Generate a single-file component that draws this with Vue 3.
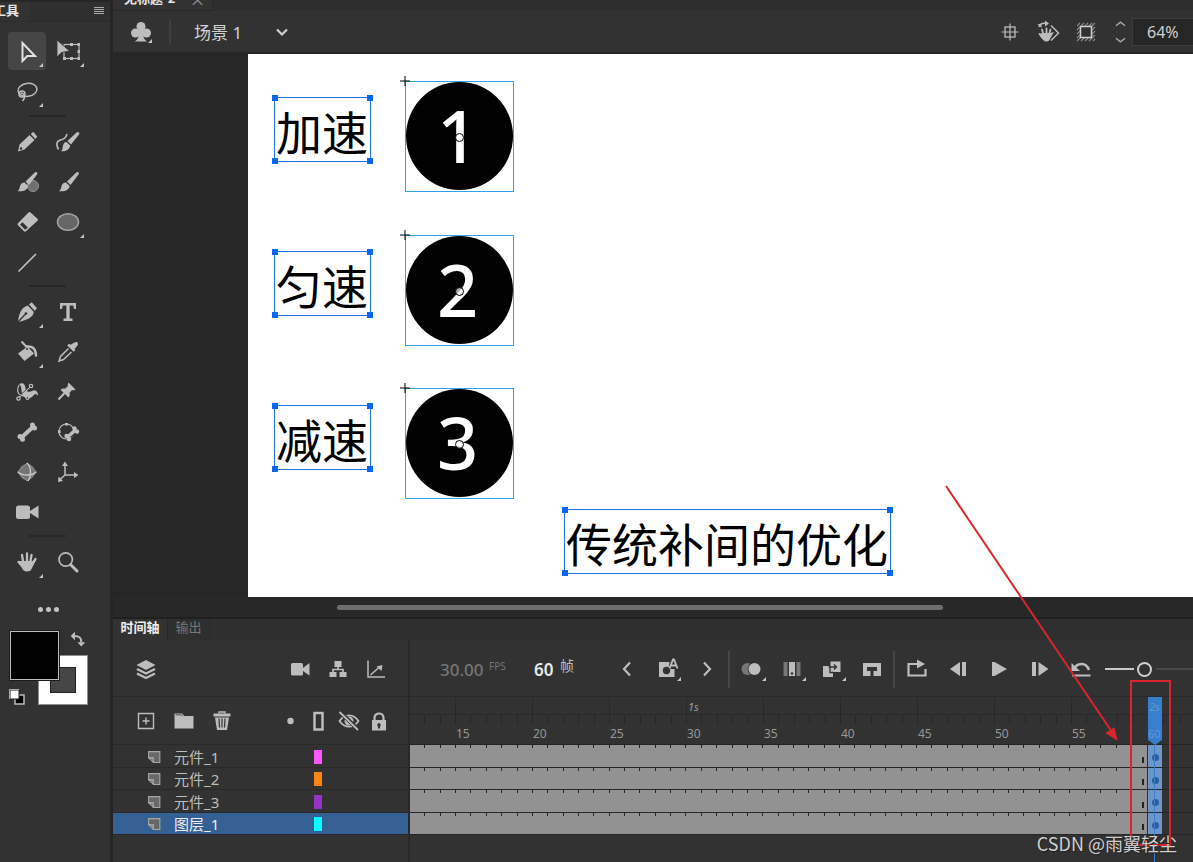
<script setup>
import { ref } from 'vue'

const icons = {
  select: '<path d="M7.5 4v18l4.8-5H20z" fill="none" stroke="currentColor" stroke-width="2"/>',
  transform: '<rect x="8" y="5.500" width="15" height="14" fill="none" stroke="currentColor" stroke-width="1.200"/><path d="M14 4h3v3h-3zM21.500 4h2.500v3h-2.500zM21.500 11h2.500v3h-2.500zM21.500 18h2.500v3h-2.500zM14 18h3v3h-3zM7 18h3v3h-3z"/><path d="M1 1v17l4.500-4.500 8-1.500z" stroke="#323232" stroke-width=".8"/>',
  lasso: '<g fill="none" stroke="currentColor" stroke-width="1.500"><ellipse cx="12.500" cy="11" rx="9.500" ry="6.500" transform="rotate(-8 12 11)"/><circle cx="7" cy="15" r="3"/><path d="M5.500 14c5 0 5 5 2 8"/></g>',
  pencil: '<path d="M4.500 14.500 14.500 5l5 5L9.500 19.500 3 21.500zM15.800 4l2.500-2.200 4 5L20.300 9z"/><circle cx="6" cy="18.500" r="1.200" fill="#323232"/>',
  brush: '<path d="M22.500 2.500c.6.600.5 1.200 0 2L14.500 15l-3.500-3.500 9-8.700c.9-.8 1.800-.9 2.500-.3zM10 12.500l3.700 3.500c-.5 3.500-4.200 6-10.700 5.200 2-1.500 2-3 2.500-5.200.5-2 2-3.300 4.500-3.500z"/>',
  fluid: '<path d="M23 2.500c.6.600.5 1.200 0 2L15 14.500 11.500 11l9-8.500c.9-.8 1.800-.8 2.500 0zM10.500 12l3.700 3.500c-.5 3.500-3.700 6.500-9.200 5.700 2-1.500 1.500-3.500 2-5.700.5-2 1.500-3.300 3.500-3.500z"/><path d="M2.500 19.500C-.5 14 .8 11 4.500 10S10 8 11 4" fill="none" stroke="currentColor" stroke-width="1.600"/>',
  mixbrush: '<circle cx="18" cy="16" r="5.500" fill="#707070" stroke="#929292"/><path d="M22 2.500c.6.600.5 1.200 0 2L14 15l-3.500-3.500 9-8.700c.9-.8 1.800-.9 2.500-.3zM9.500 12.500l3.700 3.500c-.5 3.500-4.200 6-10.700 5.200 2-1.500 2-3 2.500-5.200.5-2 2-3.300 4.500-3.500z"/>',
  eraser: '<path d="M13.500 2.500c.7-.7 1.400-.7 2 0l7 6.300c.6.600.6 1.300 0 1.900L11 21.300c-.7.600-1.400.6-2 0l-6-6c-.6-.7-.6-1.300 0-2z"/><path d="m5 14.500 2.500-2.200 5.300 5.200-2.600 2.300z" fill="#323232"/>',
  oval: '<ellipse cx="12" cy="12" rx="10.500" ry="8.200" fill="#666" stroke="#a5a5a5" stroke-width="1.500"/>',
  line: '<path d="M4 21 20.500 4.500" stroke="currentColor" stroke-width="1.700" stroke-linecap="round"/>',
  pen: '<path d="m14 4.500 2.700-2.300 5.300 6-2.300 2.500zM12.800 5.500l6 6.500c-.5 5-6 8-15.800 10C4 14 6 7.500 12.800 5.500z"/><path d="m3 22 7.500-8" stroke="#323232" stroke-width="1.200"/><circle cx="11" cy="13.500" r="1.300" fill="#323232"/>',
  type: '<path d="M4 3h16v6h-2l-.8-3.500h-3.500v13h2.800V21H7.500v-2.500h2.800v-13H6.800L6 9H4z"/>',
  bucket: '<path d="m3 13.500 9.500-7 6.500 7L9.500 21z"/><path d="m6.500 1.500 6 6.500" stroke="currentColor" stroke-width="2"/><path d="M12 6.500c5-.5 8.500 1.500 9 9" fill="none" stroke="currentColor" stroke-width="2.500" stroke-linecap="round"/><circle cx="12" cy="9" r="1" fill="#323232"/>',
  dropper: '<path d="M18.500 2.500c2-1.500 4.500.5 3 3L18.500 9l1 1-1.800 1.800-6.500-6.300L13 3.800l1.500 1z"/><path d="M12.500 8.500 4.500 16.500 3 21l4.500-1.500L15.500 12" fill="none" stroke="currentColor" stroke-width="1.500"/>',
  warp: '<path d="M4 4c4-2 6 0 6.500 4s2 4 5 3.500C18 10.500 21 8 23 14l-.5 2c-1-3-2.500-2.500-4.500 0-3 3.500-7 3-9.500 0C5 12 8 7 4 4z"/><g fill="none" stroke="currentColor" stroke-width="1.200"><path d="M3.500 18 16 6M4 5c-2 4-2 6 0 9l9 4"/></g><path d="m5 15.500 9-8.500" stroke="#323232" stroke-width=".8"/><g fill="#323232" stroke="currentColor" stroke-width="1.200"><circle cx="3.500" cy="18.500" r="1.700"/><circle cx="16" cy="6" r="1.700"/><circle cx="12.500" cy="18" r="1.400"/></g>',
  pin: '<path d="m12.500 2.500 7 7c-1.500 1-2.500 1-3.500.5L13.500 13c.5 2 .2 3-1 4.500L4.500 9.800C6 8.500 7.500 8.300 9 8.700L12 6c-.5-1-.3-2.200.5-3.500z"/><path d="m8.500 13-6 6.500" stroke="currentColor" stroke-width="2"/>',
  bone: '<path d="m6.500 17.500 12-11" stroke="currentColor" stroke-width="4"/><circle cx="17.500" cy="5" r="2.500"/><circle cx="19.500" cy="8" r="2.500"/><circle cx="5" cy="16.500" r="2.500"/><circle cx="7.500" cy="19.200" r="2.500"/>',
  bind: '<circle cx="10.500" cy="11.500" r="7.500" fill="none" stroke="currentColor" stroke-width="1.200"/><path d="M9 3h3v2.500H9zM2 10h2.500v3H2z"/><path d="m11.500 17 8-7" stroke="#323232" stroke-width="6"/><path d="m11.500 17 8-7" stroke="currentColor" stroke-width="3.500"/><circle cx="18.500" cy="8.500" r="2.200"/><circle cx="21" cy="11.500" r="2.200"/><circle cx="10.500" cy="16" r="2.200"/><circle cx="13" cy="19" r="2.200"/>',
  sphere: '<circle cx="12" cy="12" r="8" fill="#757575"/><path d="M2.500 12 12 3l9.500 9L12 21z" fill="#747474" stroke="#959595"/><path d="M3 12c4 4 14 4 18 0M12 3c5 4 4 14 1 18" fill="none" stroke="#c8c8c8" stroke-width="1.300"/>',
  axes: '<path d="M9 4v11h11M9 15l-5.500 5" fill="none" stroke="currentColor" stroke-width="1.500"/><path d="m9 1.500 3 4.500H6zM22.500 15 18 18v-6zM2 22l.5-5.500 4.500 4.500z"/>',
  camera: '<rect x="1" y="5.500" width="14" height="13.500" rx="2.500"/><path d="m15 11 8.500-5.500v13L15 13z"/>',
  hand: '<path d="M7 11h11l3-1-4 8c-1 2.500-2 3.500-5 3.500S8 20 7 18l-4.500-7z"/><g fill="none" stroke="currentColor" stroke-linecap="round" stroke-width="2.300"><path d="M8.500 14 7 5M12 13V3.500M15 14l1.500-9M16.500 15l4-6M8 17l-4.500-5"/></g>',
  magnifier: '<circle cx="9.700" cy="9.500" r="6.700" fill="none" stroke="currentColor" stroke-width="1.700"/><path d="m14.500 14.500 6.500 6.500" stroke="currentColor" stroke-width="3" stroke-linecap="round"/>',
  club: '<circle cx="12" cy="6.500" r="4.500"/><circle cx="6.500" cy="13" r="4.500"/><circle cx="17.500" cy="13" r="4.500"/><path d="M10 8h4v5c.4 5 1.500 7 4.500 8.500h-13c3-1.500 4-3.500 4.500-8.500z"/>',
  chevron: '<path d="m7 9.500 5 5 5-5" fill="none" stroke="currentColor" stroke-width="2.200"/>',
  center: '<path d="M12 3.500v17M3.500 12h17" stroke="currentColor" stroke-width="1.200"/><rect x="7" y="7" width="10" height="10" fill="none" stroke="currentColor" stroke-width="1.300"/>',
  rotate: '<path d="m15 5.500 7.500 7.500-7.500 7.500" fill="none" stroke="currentColor" stroke-width="1.500"/><path d="M3 7c1-3 4-4 7-3.500" fill="none" stroke="currentColor" stroke-width="1.500"/><path d="m9 .5 4 3-4 3zM1.500 4h4v4z"/><path d="M6.500 13h8l3.500-1-3.500 6c-1 2.500-2 3.500-4 3.500-3 0-4-2-7.500-7.500z"/><path d="M7.500 15 6 9.500M10.500 15V8.500M13 15l1.500-5.500M6.500 18 3.500 14" stroke="currentColor" stroke-width="1.800" stroke-linecap="round"/>',
  clip: '<path d="M3 6l3-3M3 10l7-7M3 14 14 3M3 18 18 3M3 21 21 3M7 21 21 7M11 21l10-10M15 21l6-6M19 21l2-2" stroke="#8a8a8a" stroke-width="1.100"/><rect x="6.500" y="6.500" width="11" height="11" fill="#323232" stroke="#d0d0d0" stroke-width="1.500"/>',
  layers: '<path d="M12 3 2.500 8l9.500 5 9.500-5z"/><path d="m3 12 9 4.500 9-4.500M3 16.500 12 21l9-4.500" fill="none" stroke="currentColor" stroke-width="2.300"/>',
  video: '<rect x="3" y="6" width="12" height="12.500" rx="1.500"/><path d="m15 11 6.500-5v12.500L15 14z"/>',
  tree: '<rect x="8.500" y="4" width="7" height="6"/><rect x="3.500" y="15" width="7" height="5"/><rect x="13.500" y="15" width="7" height="5"/><path d="M12 10v2.500M7 15v-2.500h10V15" fill="none" stroke="currentColor" stroke-width="1.600"/>',
  graph: '<path d="M4 3.500v16.500h17M6.500 18l9-8" fill="none" stroke="currentColor" stroke-width="1.500"/><path d="m12.500 9.500 6-1.500-1 6z"/>',
  add: '<path d="M4.500 4.500h15v15h-15zM12 8.500v7M8.500 12h7" fill="none" stroke="currentColor" stroke-width="1.400"/>',
  folder: '<path d="M2.500 4.500H10l2.500 2.500h9v12.500h-19z"/><path d="M3.500 5.800h6l1.300 1.400" fill="none" stroke="#323232" stroke-width=".8"/>',
  trash: '<path d="M3.500 4.500h17v3h-17zM5 8.500h14l-2 12.500H7z"/><path d="M9 4.500V3h6v1.500" fill="none" stroke="currentColor" stroke-width="1.300"/><path d="m9 9.500.5 9M12 9.500v9M15 9.500l-.5 9" stroke="#323232" stroke-width="1.200"/>',
  bullet: '<circle cx="13.500" cy="12" r="3.200"/>',
  outline: '<rect x="7.500" y="4" width="8" height="16.500" fill="none" stroke="currentColor" stroke-width="2.500"/>',
  hidden: '<path d="M2.500 12c5-7.500 14-7.500 19 0-5 7.500-14 7.500-19 0z" fill="none" stroke="currentColor" stroke-width="1.800"/><circle cx="12" cy="12" r="4.500"/><path d="m3 3 18.500 18" stroke="#323232" stroke-width="4"/><path d="m2.500 3 18.500 18" stroke="currentColor" stroke-width="1.800"/>',
  lock: '<path d="M5 11h14v10.500H5z"/><path d="M7.500 12V9c0-6 9-6 9 0v3" fill="none" stroke="currentColor" stroke-width="2.200"/><path d="M12 14a2 2 0 0 1 1 3.500v2h-2v-2a2 2 0 0 1 1-3.500z" fill="#323232"/>',
  page: '<path d="M5.500 5.500h13.500v13h-7.500L5.500 13z" fill="#686868" stroke="#a6a6a6" stroke-width="1.300"/><path d="M5.500 13H11v5.500" fill="none" stroke="#b5b5b5" stroke-width="1.300"/>',
  prev: '<path d="m15 5.500-6 6.500 6 6.500" fill="none" stroke="currentColor" stroke-width="2.200"/>',
  next: '<path d="m9 5.500 6 6.500-6 6.500" fill="none" stroke="currentColor" stroke-width="2.200"/>',
  autokey: '<path d="M4 5h10.500l-1 7h6v8H4z"/><circle cx="11.500" cy="13.500" r="3.700" fill="#323232"/><path d="m14.500 11.500 3.500-9h1l3.500 9M15.500 8.500h6" fill="none" stroke="currentColor" stroke-width="1.900"/>',
  onion: '<circle cx="7.500" cy="12" r="6" fill="#777"/><circle cx="14.500" cy="12" r="6.800" fill="#323232"/><circle cx="14.500" cy="12" r="6"/>',
  multi: '<path d="M3.500 5h4v14h-4zM16.500 5h4v14h-4z" fill="#777"/><path d="M9 5h6v14H9z"/><circle cx="12" cy="16.500" r="1.300" fill="#323232"/>',
  tween: '<path d="M3 9h10v11H3z"/><path d="M10.500 4.500h10v10.500h-10z"/><path d="M10 9v6.500h4M8.500 10h7.500M14 7.500l2.500 2.500-2.500 2.500" fill="none" stroke="#323232" stroke-width="1.300"/>',
  insert: '<rect x="3" y="6" width="18" height="13"/><path d="M7 10h10v4h-3.500v5h-3v-5H7z" fill="#323232"/>',
  loop: '<path d="M3.500 12V7H14M3.500 7v11.500h17V12" fill="none" stroke="currentColor" stroke-width="2.200"/><path d="m12 2.500 8 4.500-8 4.500z"/>',
  back: '<path d="M14 5v14L4 12zM16 5h4v14h-4z"/>',
  play: '<path d="M5 5h2.500L20 12 7.500 19H5z"/>',
  forward: '<path d="M10.500 5v14l10-7zM4 5h4v14H4z"/>',
  reset: '<path d="M4.500 12.500C8 5.500 17 4.500 20 13" fill="none" stroke="currentColor" stroke-width="2.500"/><path d="M2.500 6v8H11zM3 17.500h18.500v2H3z"/>',
  swap: '<path d="M6 7c7 0 10 2 10 9" fill="none" stroke="currentColor" stroke-width="3"/><path d="m1 7 6-6v12zM16 22l-5.500-6h11z"/>',
  defaults: '<path d="M10 10h9v9h-9z" fill="#000" stroke="#bbb" stroke-width="1.500"/><path d="M5 5h9v9H5z" fill="#fff" stroke="#222" stroke-width="1"/><path d="M4 4.500h10M4.500 4v10" fill="none" stroke="#aaa" stroke-width="1"/>',
}

const toolGroups = [
  [['select', '选择工具', true], ['transform', '任意变形工具', true], ['lasso', '套索工具', true]],
  [['pencil', '铅笔工具'], ['fluid', '流畅画笔工具'], ['mixbrush', '传统画笔工具'], ['brush', '画笔工具'], ['eraser', '橡皮擦工具'], ['oval', '椭圆工具', true], ['line', '线条工具']],
  [['pen', '钢笔工具', true], ['type', '文本工具'], ['bucket', '颜料桶工具', true], ['dropper', '滴管工具'], ['warp', '资源变形工具'], ['pin', '图钉工具'], ['bone', '骨骼工具'], ['bind', '绑定工具'], ['sphere', '3D 旋转工具'], ['axes', '3D 平移工具'], ['camera', '摄像头']],
  [['hand', '手形工具', true], ['magnifier', '缩放工具']],
]
const activeTool = ref('select')

const captions = [
  { text: '加速', cls: 'c1' },
  { text: '匀速', cls: 'c2' },
  { text: '减速', cls: 'c3' },
  { text: '传统补间的优化', cls: 'c4' },
]
const symbols = [
  { text: '1', cls: 's1' },
  { text: '2', cls: 's2' },
  { text: '3', cls: 's3' },
]

const layers = [
  { name: '元件_1', color: 'pink' },
  { name: '元件_2', color: 'orange' },
  { name: '元件_3', color: 'purple' },
  { name: '图层_1', color: 'cyan' },
]
const selected = ref('图层_1')

const marks = [15, 20, 25, 30, 35, 40, 45, 50, 55, 60]
const navButtons = [['prev', '上一关键帧'], ['autokey', '自动关键帧', true], ['next', '下一关键帧']]
const frameButtons = [['onion', '绘图纸外观', true], ['multi', '编辑多个帧', true], ['tween', '创建补间', true], ['insert', '插入帧']]
const playButtons = [['loop', '循环'], ['back', '后退一帧'], ['play', '播放'], ['forward', '前进一帧'], ['reset', '重置缩放']]
const zoom = ref('64%')
const scale = ref(44)
</script>

<template>
  <div class="app">
    <aside class="tools">
      <header class="tools-head">
        <span class="tools-title">工具</span>
        <button class="burger" aria-label="面板菜单"><i></i><i></i><i></i><i></i></button>
      </header>
      <div v-for="(group, g) in toolGroups" :key="g" class="tool-group">
        <button
          v-for="t in group"
          :key="t[0]"
          class="tool"
          :class="{ active: activeTool === t[0], more: t[2] }"
          :aria-label="t[1]"
          @click="activeTool = t[0]"
        >
          <svg viewBox="0 0 24 24" v-html="icons[t[0]]"></svg>
        </button>
      </div>
      <button class="dots" aria-label="编辑工具栏"><i></i><i></i><i></i></button>
      <div class="swatches">
        <button class="stroke-color" aria-label="笔触颜色"><i></i></button>
        <button class="fill-color" aria-label="填充颜色"></button>
        <button class="swap" aria-label="交换颜色"><svg viewBox="0 0 24 24" v-html="icons.swap"></svg></button>
        <button class="defaults" aria-label="默认颜色"><svg viewBox="0 0 24 24" v-html="icons.defaults"></svg></button>
      </div>
    </aside>

    <main class="work">
      <div class="doc-tabs">
        <div class="doc-tab"><span>无标题-2</span><button aria-label="关闭">×</button></div>
      </div>
      <div class="scene-bar">
        <button class="club more" aria-label="元件"><svg viewBox="0 0 24 24" v-html="icons.club"></svg></button>
        <span class="scene-sep"></span>
        <button class="scene">场景 1<svg viewBox="0 0 24 24" v-html="icons.chevron"></svg></button>
        <div class="view-tools">
          <button aria-label="舞台居中"><svg viewBox="0 0 24 24" v-html="icons.center"></svg></button>
          <button aria-label="旋转舞台"><svg viewBox="0 0 24 24" v-html="icons.rotate"></svg></button>
          <button aria-label="裁切舞台"><svg viewBox="0 0 24 24" v-html="icons.clip"></svg></button>
          <div class="stepper">
            <button aria-label="放大"><svg viewBox="0 0 12 6"><path d="m1 5 5-4 5 4" /></svg></button>
            <button aria-label="缩小"><svg viewBox="0 0 12 6"><path d="m1 1 5 4 5-4" /></svg></button>
          </div>
          <input v-model="zoom" class="zoom" aria-label="缩放比例" />
        </div>
      </div>

      <section class="stage">
        <div class="artboard">
          <div v-for="c in captions" :key="c.cls" class="caption" :class="c.cls">
            {{ c.text }}<i></i><i></i><i></i><i></i>
          </div>
          <div v-for="s in symbols" :key="s.cls" class="symbol" :class="s.cls">
            <div class="disc">{{ s.text }}</div>
            <svg class="origin" viewBox="0 0 10 10"><path d="M5 0v10M0 5h10" /></svg>
            <b></b>
          </div>
        </div>
      </section>
      <div class="hscroll"><div></div></div>

      <section class="timeline">
        <nav class="panel-tabs">
          <button class="on">时间轴</button>
          <button>输出</button>
        </nav>
        <div class="timeline-body">
          <div class="layer-side">
            <div class="side-bar top">
              <button aria-label="图层视图"><svg viewBox="0 0 24 24" v-html="icons.layers"></svg></button>
              <div class="right">
                <button aria-label="摄像头"><svg viewBox="0 0 24 24" v-html="icons.video"></svg></button>
                <button aria-label="父级视图"><svg viewBox="0 0 24 24" v-html="icons.tree"></svg></button>
                <button aria-label="图层深度"><svg viewBox="0 0 24 24" v-html="icons.graph"></svg></button>
              </div>
            </div>
            <div class="side-bar low">
              <button aria-label="新建图层"><svg viewBox="0 0 24 24" v-html="icons.add"></svg></button>
              <button aria-label="新建文件夹"><svg viewBox="0 0 24 24" v-html="icons.folder"></svg></button>
              <button aria-label="删除"><svg viewBox="0 0 24 24" v-html="icons.trash"></svg></button>
              <div class="right">
                <button aria-label="突出显示"><svg viewBox="0 0 24 24" v-html="icons.bullet"></svg></button>
                <button aria-label="轮廓"><svg viewBox="0 0 24 24" v-html="icons.outline"></svg></button>
                <button aria-label="隐藏"><svg viewBox="0 0 24 24" v-html="icons.hidden"></svg></button>
                <button aria-label="锁定"><svg viewBox="0 0 24 24" v-html="icons.lock"></svg></button>
              </div>
            </div>
            <div class="rows">
              <button
                v-for="l in layers"
                :key="l.name"
                class="layer"
                :class="{ selected: selected === l.name }"
                @click="selected = l.name"
              >
                <svg viewBox="0 0 24 24" v-html="icons.page"></svg>
                <span>{{ l.name }}</span>
                <i :class="l.color"></i>
              </button>
            </div>
          </div>

          <div class="frame-side">
            <div class="controls">
              <span class="fps">30.00</span><span class="fps-unit">FPS</span>
              <span class="frame">60</span><span class="frame-unit">帧</span>
              <div class="btns nav">
                <button v-for="b in navButtons" :key="b[0]" :class="{ more: b[2] }" :aria-label="b[1]"><svg viewBox="0 0 24 24" v-html="icons[b[0]]"></svg></button>
              </div>
              <span class="bar"></span>
              <div class="btns">
                <button v-for="b in frameButtons" :key="b[0]" :class="{ more: b[2] }" :aria-label="b[1]"><svg viewBox="0 0 24 24" v-html="icons[b[0]]"></svg></button>
              </div>
              <span class="bar"></span>
              <div class="btns playback">
                <button v-for="b in playButtons" :key="b[0]" :aria-label="b[1]"><svg viewBox="0 0 24 24" v-html="icons[b[0]]"></svg></button>
              </div>
              <input v-model="scale" class="scale" type="range" min="0" max="100" aria-label="时间轴缩放" />
            </div>

            <div class="ruler">
              <div class="lead"><i v-for="n in 3" :key="n"></i></div>
              <div v-for="m in marks" :key="m" class="mark">
                <em>{{ m === 30 ? '1s' : '' }}</em>
                <div class="ticks"><i v-for="n in 5" :key="n"></i></div>
                <span>{{ m === 60 ? '' : m }}</span>
              </div>
            </div>

            <div class="rows">
              <div v-for="l in layers" :key="l.name" class="track">
                <div class="span"><i v-for="n in 48" :key="n"></i></div>
                <div class="keyframe"><b></b></div>
              </div>
            </div>
            <div class="playhead"><em>2s</em><span>60</span></div>
            <div class="playline"></div>
          </div>
        </div>
      </section>
    </main>

    <svg class="notes" aria-hidden="true">
      <path d="M946 486 1112 732" stroke-width="2" />
      <path class="tip" d="m1117 740-11-7 8-5z" />
      <rect x="1131" y="681" width="39" height="164" stroke-width="2" />
    </svg>
    <div class="credit">CSDN @雨翼轻尘</div>
  </div>
</template>

<style>
body {
  background: #323232;
  overflow: hidden;
}
</style>

<style scoped>
.app {
  position: relative;
  display: flex;
  height: 100vh;
  overflow: hidden;
  background: #323232;
  color: #bdbdbd;
  font-family: "Noto Sans", "Noto Sans CJK SC", sans-serif;
  font-size: 14px;
}
.app * { box-sizing: border-box; }
button {
  display: flex;
  align-items: center;
  justify-content: center;
  padding: 0;
  border: 0;
  background: none;
  color: inherit;
  font: inherit;
}
svg { fill: currentColor; flex: none; }
button svg { width: 24px; height: 24px; }
.more { position: relative; }
.more::after {
  content: "";
  position: absolute;
  right: 3px;
  bottom: 3px;
  border-left: 4px solid transparent;
  border-bottom: 4px solid #c4c4c4;
}

/* tool panel */
.tools {
  flex: none;
  width: 113px;
  border-top: 2px solid #262626;
  border-right: 3px solid #252525;
}
.tools-head {
  display: flex;
  justify-content: space-between;
  height: 20px;
  margin-bottom: 9px;
  background: linear-gradient(#2f2f2f, #2f2f2f) 30px 0 / 100% 100% no-repeat;
  border-bottom: 1px solid #2c2c2c;
}
.tools-title {
  margin-left: -7px;
  color: #e4e4e4;
  font-size: 13px;
  font-weight: bold;
  line-height: 15px;
  font-family: "Noto Sans CJK SC", sans-serif;
}
.burger {
  flex-direction: column;
  gap: 1px;
  width: 10px;
  height: 16px;
  margin-right: 6px;
}
.burger i { width: 10px; height: 1px; background: #aaa; }
.tool-group {
  display: grid;
  grid-template-columns: 40px 40px;
  grid-auto-rows: 40px;
  column-gap: 1px;
  margin-left: 7px;
  padding-bottom: 11px;
  background: linear-gradient(#272727, #272727) 22px calc(100% - 5px) / 37px 2px no-repeat;
}
.tool-group:nth-of-type(2), .tool-group:nth-of-type(3) { padding-bottom: 10px; }
.tool-group:nth-of-type(4) { background: none; padding-bottom: 14px; }
.tool { margin: 1px; border-radius: 4px; }
.tool.active { background: #464646; color: #e2e2e2; }
.dots { gap: 3px; margin-left: 38px; height: 26px; }
.dots i { width: 5px; height: 5px; border-radius: 50%; background: #c4c4c4; }
.swatches { position: relative; height: 84px; margin-top: 4px; }
.swatches button { position: absolute; }
.stroke-color {
  left: 38px;
  top: 29px;
  width: 50px;
  height: 50px;
  background: #fff;
  border: 1px solid #8d8d8d;
}
.stroke-color i { width: 26px; height: 26px; background: #464646; border: 1px solid #222; }
.fill-color {
  left: 10px;
  top: 5px;
  width: 49px;
  height: 49px;
  background: #000;
  border: 1px solid #bdbdbd;
  outline: 1px solid #1c1c1c;
}
.swap { left: 70px; top: 5px; }
.swatches .swap svg { width: 17px; height: 17px; }
.defaults { left: 5px; top: 59px; }

/* document area */
.work { flex: 1; min-width: 0; display: flex; flex-direction: column; }
.doc-tabs { flex: none; height: 11px; overflow: hidden; background: #2e2e2e; }
.doc-tab {
  display: flex;
  align-items: flex-end;
  gap: 14px;
  width: 100px;
  height: 11px;
  padding: 0 11px 4px;
  background: #323232;
  border-bottom: 1px solid #282828;
  border-right: 1px solid #2a2a2a;
  font: bold 13px/16px "Noto Sans CJK SC", sans-serif;
  color: #e4e4e4;
  white-space: nowrap;
}
.doc-tab button { font-weight: normal; font-size: 16px; line-height: 14px; color: #999; }
.scene-bar {
  flex: none;
  display: flex;
  align-items: center;
  height: 42px;
  border-bottom: 1px solid #292929;
}
.club { width: 28px; height: 28px; margin-left: 14px; }
.scene-sep { width: 2px; height: 26px; margin: 0 23px 0 14px; background: #3f3f3f; }
.scene { gap: 28px; font-size: 17px; color: #d0d0d0; }
.view-tools { display: flex; align-items: center; margin-left: auto; }
.view-tools > button { width: 38px; }
.stepper {
  display: flex;
  flex-direction: column;
  width: 27px;
  height: 28px;
  padding-left: 3px;
  justify-content: space-between;
}
.stepper button { height: 12px; }
.stepper svg { width: 11px; height: 6px; fill: none; stroke: #aaa; stroke-width: 1.5; }
.zoom {
  width: 61px;
  height: 28px;
  padding: 0 0 0 14px;
  border: 1px solid #3c3c3c;
  border-right: 0;
  background: #262626;
  color: #d0d0d0;
  font: 16px "Noto Sans", sans-serif;
}

/* stage */
.stage {
  flex: 1;
  min-height: 0;
  position: relative;
  padding: 1px 0 0 135px;
  background: #262626;
  overflow: hidden;
}
.artboard { position: relative; height: 100%; background: #fff; }
.caption {
  position: absolute;
  left: 26px;
  height: 65px;
  padding: 0 2px 0 1px;
  border: 1px solid #1f70ec;
  color: #000;
  font: 46px/64px "Noto Sans CJK SC", sans-serif;
  white-space: nowrap;
}
.c1 { top: 43px; }
.c2 { top: 197px; }
.c3 { top: 351px; }
.c4 { left: 316px; top: 455px; }
.caption i { position: absolute; width: 6px; height: 6px; background: #0866f5; }
.caption i:nth-of-type(1) { left: -3px; top: -3px; }
.caption i:nth-of-type(2) { right: -3px; top: -3px; }
.caption i:nth-of-type(3) { left: -3px; bottom: -3px; }
.caption i:nth-of-type(4) { right: -3px; bottom: -3px; }
.symbol {
  position: absolute;
  left: 157px;
  width: 109px;
  height: 111px;
  border: 1px solid #2ba6e0;
}
.s1 { top: 27px; }
.s2 { top: 181px; }
.s3 { top: 334px; }
.disc {
  width: 107px;
  height: 108px;
  padding-right: 4px;
  border-radius: 50%;
  background: #000;
  color: #fff;
  font: 500 72px/106px "Noto Sans", sans-serif;
  text-align: center;
}
.origin {
  position: absolute;
  left: -6px;
  top: -6px;
  width: 10px;
  height: 10px;
  stroke: #000;
  stroke-width: 1;
}
.symbol b {
  position: absolute;
  left: 49px;
  top: 51px;
  width: 9px;
  height: 9px;
  border: 1px solid #000;
  border-radius: 50%;
  background: #fffa;
}
.hscroll {
  flex: none;
  height: 22px;
  padding: 8px 250px 0 224px;
  background: #282828;
  border-bottom: 2px solid #202020;
}
.hscroll div { height: 5px; border-radius: 3px; background: #6e6e6e; }

/* timeline */
.timeline { flex: none; height: 243px; display: flex; flex-direction: column; }
.panel-tabs {
  display: flex;
  height: 21px;
  background: #2f2f2f;
  font: 13px/16px "Noto Sans CJK SC", sans-serif;
}
.panel-tabs button { width: 42px; padding-bottom: 6px; color: #777; border-right: 1px solid #292929; }
.panel-tabs button.on { width: 55px; background: #323232; color: #eee; font-weight: bold; }
.timeline-body { flex: 1; display: flex; min-width: 0; }
.layer-side { flex: none; width: 297px; border-right: 2px solid #292929; }
.side-bar { display: flex; align-items: center; border-bottom: 1px solid #292929; }
.side-bar .right { display: flex; margin-left: auto; }
.side-bar.top { height: 57px; padding: 2px 20px 0 21px; }
.side-bar.top .right { gap: 14px; }
.side-bar.low { height: 48px; padding: 0 17px 0 21px; gap: 14px; }
.side-bar.low .right { gap: 6px; }
.rows { display: grid; grid-template-rows: repeat(4, minmax(0, 1fr)); height: 90px; }
.layer {
  justify-content: flex-start;
  width: 100%;
  padding: 2px 0 0 29px;
  border-bottom: 1px solid #292929;
  font-size: 15px;
  line-height: 20px;
}
.layer svg { height: 20px; }
.layer span { flex: 1; margin-left: 8px; text-align: left; }
.layer i { width: 8px; height: 14px; margin-right: 86px; }
.layer.selected { background: #346094; color: #eee; }
.pink { background: #ff57ff; }
.orange { background: #ff8412; }
.purple { background: #9533c7; }
.cyan { background: #00ffff; }

.frame-side { position: relative; flex: 1; min-width: 0; overflow: hidden; }
.controls {
  display: flex;
  align-items: center;
  height: 57px;
  padding: 2px 0 0 30px;
  border-bottom: 1px solid #292929;
}
.fps { width: 49px; font-size: 17px; font-weight: 500; color: #757575; }
.fps-unit { width: 45px; padding-bottom: 6px; font-size: 10px; color: #757575; }
.frame { width: 26px; font-size: 17px; font-weight: 600; color: #e8e8e8; }
.frame-unit { width: 47px; padding-bottom: 8px; font-size: 14px; }
.btns { display: flex; flex: none; }
.btns button { width: 40px; height: 24px; }
.btns .more::after { right: 6px; bottom: 0; }
.btns.playback { gap: 1px; }
.bar { flex: none; width: 2px; height: 37px; margin: 0 2px 0 1px; background: #464646; }
.scale {
  flex: 1;
  min-width: 40px;
  height: 16px;
  margin: 0 0 0 4px;
  appearance: none;
  background: linear-gradient(90deg, #c8c8c8 33%, transparent 33% 58%, #484848 58%) center / 100% 2px no-repeat;
}
.scale::-webkit-slider-thumb {
  appearance: none;
  width: 15px;
  height: 15px;
  border: 2px solid #d0d0d0;
  border-radius: 50%;
  background: transparent;
}
.ruler { display: flex; height: 48px; border-bottom: 1px solid #242424; }
.lead { display: flex; flex: none; width: 45px; height: 27px; padding-top: 18px; background: linear-gradient(#292929, #292929) 0 17px / 100% 1px no-repeat; }
.lead i, .ticks i { flex: 1; border-left: 1px solid #272727; }
.lead i:first-child { border: 0; }
.mark { flex: none; width: 77px; }
.mark em {
  display: block;
  height: 18px;
  padding-left: 1px;
  border-left: 1px solid #292929;
  border-bottom: 1px solid #292929;
  font-size: 11px;
  line-height: 19px;
  color: #9a9a9a;
}
.ticks { display: flex; height: 9px; }
.mark span { display: block; padding-left: 1px; font-size: 12px; line-height: 19px; color: #979797; }
.track { display: flex; border-bottom: 1px solid #262626; }
.span { position: relative; display: flex; flex: none; width: 738px; background: #929292; }
.span::after {
  content: "";
  position: absolute;
  right: 4px;
  bottom: 4px;
  width: 2px;
  height: 6px;
  background: #222;
}
.span i { flex: 1; background: linear-gradient(#262626, #262626) right top / 1px 3px no-repeat; }
.span i:nth-last-child(2) { background: none; }
.span i:last-child { background: none; border-right: 1px solid #333; }
.keyframe {
  display: flex;
  align-items: center;
  justify-content: center;
  width: 14px;
  background: #6d96c9;
}
.keyframe b { width: 7px; height: 7px; margin-top: 4px; border-radius: 50%; background: #2d5f9d; }
.playhead {
  position: absolute;
  left: 738px;
  top: 57px;
  width: 14px;
  height: 48px;
  overflow: hidden;
  background: #377ecd;
  clip-path: polygon(0 0, 100% 0, 100% 43px, 50% 100%, 0 43px);
  color: #6096d4;
  font-size: 11px;
}
.playhead em { display: block; padding-left: 1px; line-height: 20px; }
.playhead span { display: block; line-height: 34px; }
.playline {
  position: absolute;
  left: 744px;
  top: 105px;
  bottom: 0;
  width: 1px;
  background: #377ecd;
}

/* annotations */
.notes {
  position: absolute;
  left: 0;
  top: 0;
  width: 100%;
  height: 100%;
  fill: none;
  stroke: #d9262c;
  pointer-events: none;
}
.notes .tip { fill: #d9262c; }
.credit {
  position: absolute;
  right: 16px;
  bottom: 6px;
  font: 18px/26px "Noto Sans CJK SC", sans-serif;
  color: #cfcfcf;
  text-shadow: 1px 1px 1px #222;
}
</style>
